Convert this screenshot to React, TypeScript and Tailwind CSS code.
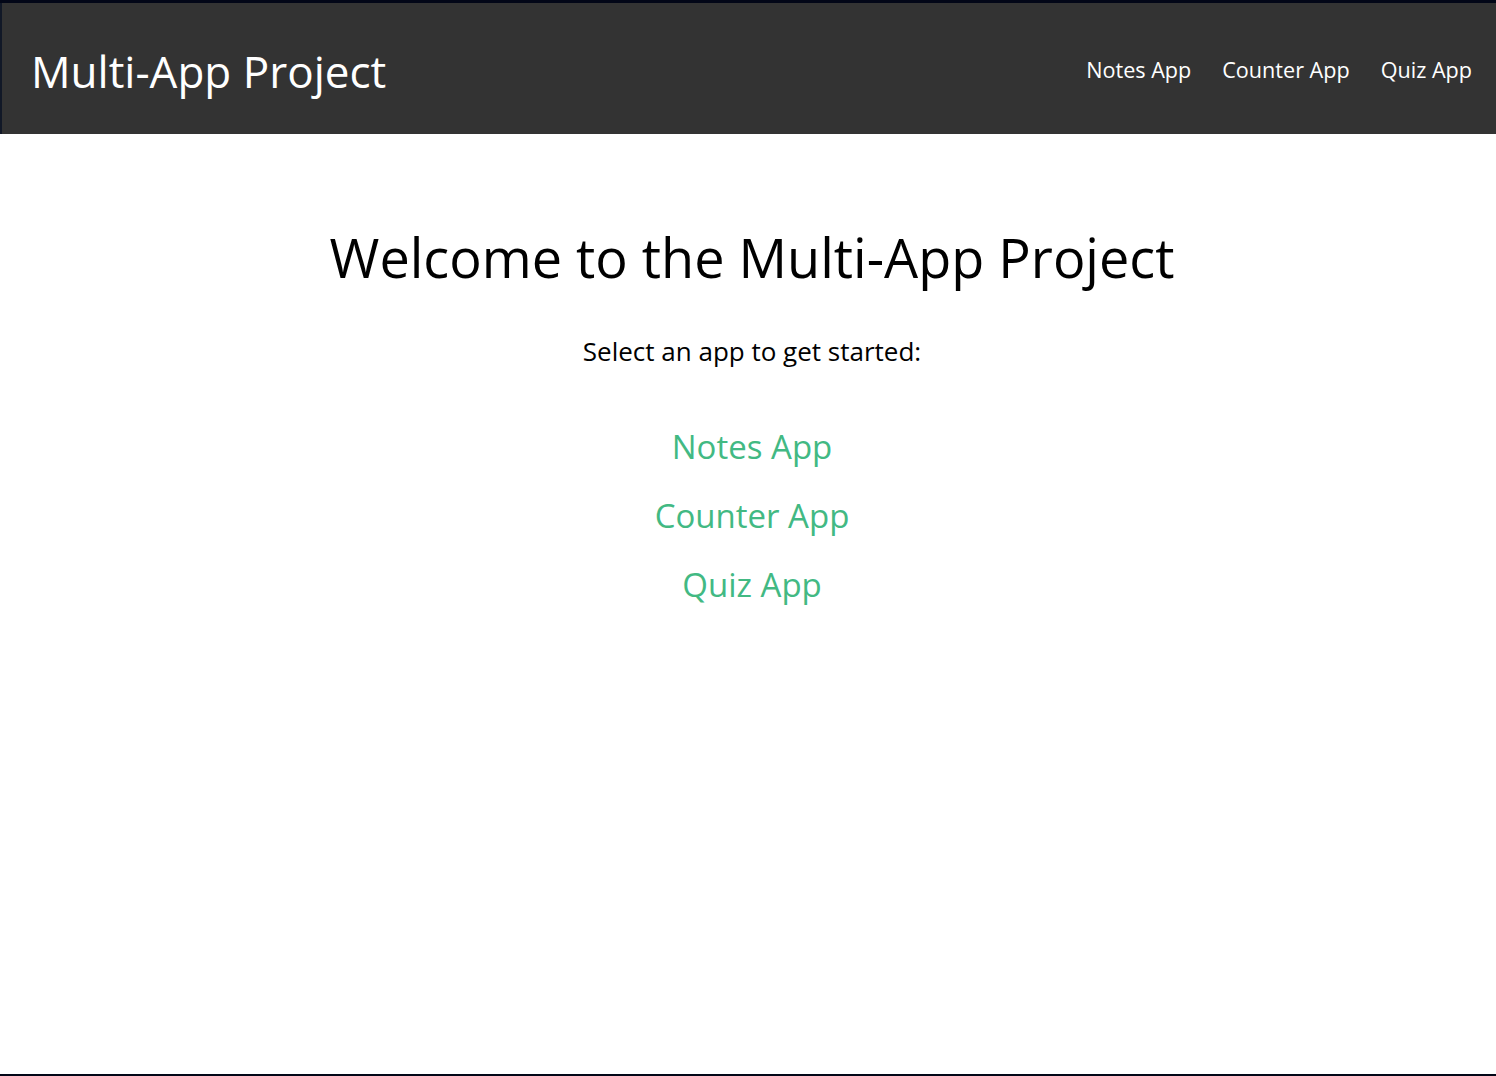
import React from "react";

const apps = ["Notes App", "Counter App", "Quiz App"];

export default function App() {
  return (
    <div
      className="flex h-[1076px] flex-col border-t-[3px] border-b-2 border-[#020617] bg-white"
      style={{ fontFamily: '"Open Sans", "Noto Sans", sans-serif' }}
    >
      <header className="flex h-[131px] shrink-0 items-center justify-between border-l-2 border-[#111827] bg-[#333333] pt-[4px] pl-[29px] pr-[24px] text-white">
        <h1 className="text-[44px] leading-none font-normal">Multi-App Project</h1>
        <nav className="flex items-center gap-[31px] text-[21.6px]">
          {apps.map((name) => (
            <a key={name} href="#" className="text-white">
              {name}
            </a>
          ))}
        </nav>
      </header>

      <main className="flex flex-col items-center pt-[87px] pl-[8px] text-black">
        <h2 className="text-[54px] leading-[72px] font-normal">Welcome to the Multi-App Project</h2>
        <p className="mt-[42px] text-[26px] leading-[32px]">Select an app to get started:</p>
        <ul className="mt-[58px] flex flex-col items-center gap-[25px]">
          {apps.map((name) => (
            <li key={name}>
              <a href="#" className="text-[33px] leading-[44px] text-[#42b983]">
                {name}
              </a>
            </li>
          ))}
        </ul>
      </main>
    </div>
  );
}
